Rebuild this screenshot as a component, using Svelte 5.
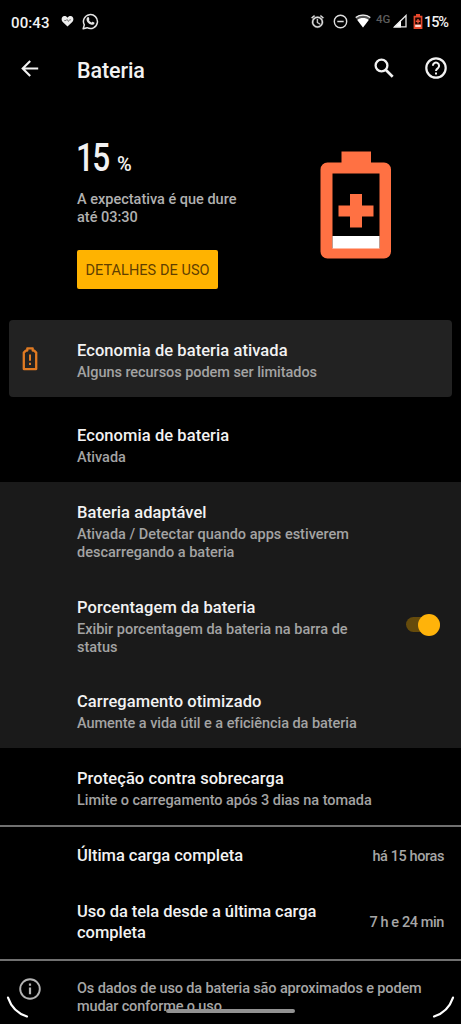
<script lang="ts">
    let showPercentage = $state(true);

    const usage = [
        { title: "Última carga completa", value: "há 15 horas" },
        {
            title: "Uso da tela desde a última carga completa",
            value: "7 h e 24 min",
        },
    ];
</script>

<div class="screen">
    <div class="status-bar">
        <span class="clock">00:43</span>
        <svg class="heart" width="13" height="12" viewBox="0 0 14 12">
            <path
                fill="#eee"
                d="M7 12 1.6 6.7C-.3 4.4.8.8 3.7.7 5.200.7 6.300 1.400 7 2.400 7.700 1.400 8.800.7 10.300.7c2.900.1 4 3.700 2.100 6z"
            />
            <path
                fill="none"
                stroke="#555"
                stroke-width="0.800"
                d="M3.500 5.500h2l1-1.200 1.500 2.200 1.200-1.800h1.500"
            />
        </svg>
        <svg class="whatsapp" width="17" height="17" viewBox="0 0 17 17">
            <path
                fill="none"
                stroke="#e4e4e4"
                stroke-width="1.500"
                stroke-linejoin="round"
                d="m1.200 15.800 1.100-3.900A7 7 0 1 1 5.100 14.700z"
            />
            <path
                fill="#e4e4e4"
                d="M5.600 4.300c.4-.4 1-.4 1.200.1l.6 1.500c.1.400-.5 1-.6 1.200.6 1.200 1.500 2 2.700 2.500.3-.2.800-1 1.200-.9l1.500.8c.5.300.2 1.100-.1 1.500-.8.900-2.100 1-3.200.6-2-.8-3.600-2.200-4.200-4.200-.4-1.200 0-2.400.9-3.100z"
            />
        </svg>
        <div class="status-right">
            <svg class="alarm" width="15" height="15" viewBox="0 0 24 24">
                <path
                    fill="#ddd"
                    stroke="#ddd"
                    stroke-width="0.500"
                    d="m22 5.700-4.600-3.900-1.300 1.500 4.600 3.900zM7.900 3.400 6.600 1.900 2 5.700l1.300 1.500zM12.500 8H11v6l4.700 2.900.8-1.200-4-2.400zM12 4a9 9 0 1 0 0 18 9 9 0 0 0 0-18zm0 15.700a6.700 6.700 0 1 1 0-13.400 6.700 6.700 0 0 1 0 13.400z"
                />
            </svg>
            <svg class="dnd" width="15" height="15" viewBox="0 0 15 15">
                <circle
                    cx="7.500"
                    cy="7.500"
                    r="6.200"
                    fill="none"
                    stroke="#ddd"
                    stroke-width="1.400"
                />
                <path stroke="#ddd" stroke-width="1.500" d="M4.300 7.500h6.400" />
            </svg>
            <svg class="wifi" width="16" height="14" viewBox="0 0 16 14">
                <path
                    fill="#555"
                    d="M8 .6C5 .6 2.300 1.600.2 3.300L8 13.400l7.800-10.100C13.700 1.600 11 .6 8 .6z"
                />
                <path
                    fill="none"
                    stroke="#eee"
                    stroke-width="1.300"
                    d="M.8 3.500C5 .4 11 .4 15.200 3.500"
                />
                <path
                    fill="#fff"
                    d="M8 13.400 2.300 6C5.400 3.400 10.600 3.400 13.700 6z"
                />
            </svg>
            <span class="network">4G</span>
            <svg class="signal" width="14" height="14" viewBox="0 0 14 14">
                <path fill="#fff" d="M.2 13.500 8 5.700v7.800z" />
                <path
                    fill="none"
                    stroke="#e8e8e8"
                    stroke-width="1.300"
                    d="M1.700 12.800 13 1.500v11.300z"
                />
            </svg>
            <svg class="battery-mini" width="10" height="15" viewBox="0 0 10 15">
                <path fill="#e8482c" d="M3 0h4v1.700h2.400V15H.6V1.700H3z" />
                <path fill="#1c0500" d="M2.200 3.500h5.600v7H2.200z" />
                <path
                    stroke="#f0553a"
                    stroke-width="1.400"
                    d="M5 5v4.400M2.800 7.200h4.400"
                />
                <path fill="#ffd9d0" d="M2.200 10.700h5.600v2.300H2.200z" />
            </svg>
            <span class="level">15%</span>
        </div>
    </div>

    <header class="app-bar">
        <svg width="18" height="17" viewBox="0 0 18 17">
            <path
                fill="none"
                stroke="#f2f2f2"
                stroke-width="2.100"
                d="M17.200 8.500H2M9.200 1 1.700 8.500 9.200 16"
            />
        </svg>
        <h1>Bateria</h1>
        <svg class="search" width="20" height="20" viewBox="0 0 20 20">
            <circle
                cx="7.500"
                cy="7.500"
                r="5.900"
                fill="none"
                stroke="#f2f2f2"
                stroke-width="2.300"
            />
            <path stroke="#f2f2f2" stroke-width="2.700" d="m11.700 11.700 7 7" />
        </svg>
        <svg class="help" width="22" height="22" viewBox="0 0 22 22">
            <circle
                cx="11"
                cy="11"
                r="9.700"
                fill="none"
                stroke="#f2f2f2"
                stroke-width="2.200"
            />
            <path
                fill="none"
                stroke="#f2f2f2"
                stroke-width="2"
                d="M7.900 8.800A3.100 3.100 0 1 1 13 11.100C11.700 12 11 12.500 11 14"
            />
            <path fill="#f2f2f2" d="M10 15.400h2v2h-2z" />
        </svg>
    </header>

    <section class="hero">
        <div class="hero-text">
            <div class="percent"><b>15</b><span>%</span></div>
            <p>A expectativa é que dure<br />até 03:30</p>
            <button>DETALHES DE USO</button>
        </div>
        <svg class="battery" width="72" height="108" viewBox="0 0 72 108">
            <path
                fill="#ff7143"
                fill-rule="evenodd"
                d="M21.500.5h29.500v11h13a7 7 0 0 1 7 7v82a7 7 0 0 1-7 7h-56.500a7 7 0 0 1-7-7v-82a7 7 0 0 1 7-7h14zM12.500 22.500V97h47V22.500z"
            />
            <path
                fill="#ff7143"
                d="M30 43h12v11.500h11.500v11H42v11H30v-11H18.500v-11H30z"
            />
            <path fill="#fff" d="M12.500 85h47v12.500h-47z" />
        </svg>
    </section>

    <div class="card">
        <svg width="16" height="24" viewBox="0 0 16 24">
            <path
                fill="none"
                stroke="#e07a22"
                stroke-width="2.300"
                stroke-linejoin="round"
                d="M5.300 3.600V1.400h5.400v2.200h1.500l2 2v16.500H1.800V5.600l2-2z"
            />
            <path fill="#e07a22" d="M7 7.500h2v6.300H7zM7 15.700h2v2.200H7z" />
        </svg>
        <div class="item">
            <h2>Economia de bateria ativada</h2>
            <p>Alguns recursos podem ser limitados</p>
        </div>
    </div>

    <div class="item">
        <h2>Economia de bateria</h2>
        <p>Ativada</p>
    </div>

    <div class="group">
        <div class="item">
            <h2>Bateria adaptável</h2>
            <p>
                Ativada / Detectar quando apps estiverem<br />descarregando a
                bateria
            </p>
        </div>
        <div class="item with-switch">
            <div>
                <h2>Porcentagem da bateria</h2>
                <p>Exibir porcentagem da bateria na barra de<br />status</p>
            </div>
            <button
                class="switch"
                class:on={showPercentage}
                aria-label="Porcentagem da bateria"
                onclick={() => (showPercentage = !showPercentage)}
            >
                <span class="thumb"></span>
            </button>
        </div>
        <div class="item">
            <h2>Carregamento otimizado</h2>
            <p class="tight">Aumente a vida útil e a eficiência da bateria</p>
        </div>
    </div>

    <div class="item">
        <h2>Proteção contra sobrecarga</h2>
        <p class="tight">Limite o carregamento após 3 dias na tomada</p>
    </div>

    <div class="usage">
        {#each usage as row}
            <div class="usage-row">
                <h2>{row.title}</h2>
                <span>{row.value}</span>
            </div>
        {/each}
    </div>

    <footer>
        <svg width="22" height="22" viewBox="0 0 22 22">
            <circle
                cx="11"
                cy="11"
                r="9.800"
                fill="none"
                stroke="#b4b4b4"
                stroke-width="1.900"
            />
            <path fill="#b4b4b4" d="M9.900 5.500h2.200v2.200H9.900zM9.900 9.500h2.200v6.800H9.900z" />
        </svg>
        <p>
            Os dados de uso da bateria são aproximados e podem<br />mudar conforme
            o uso.
        </p>
    </footer>

    <div class="home-bar"></div>
    <svg class="corner left" width="23" height="23" viewBox="0 0 23 23">
        <path d="M2 1.600C5 10.500 11.500 17.500 21 20.500" />
    </svg>
    <svg class="corner right" width="23" height="23" viewBox="0 0 23 23">
        <path d="M21 1.600C18 10.500 11.500 17.500 2 20.500" />
    </svg>
</div>

<style>
    :global(body) {
        background: #000;
    }

    .screen {
        position: relative;
        width: 461px;
        height: 1024px;
        overflow: hidden;
        background: #000;
        color: #f2f2f2;
        font-family: Roboto, "Liberation Sans", sans-serif;
    }

    h1,
    h2,
    p {
        margin: 0;
        white-space: nowrap;
    }

    svg {
        display: block;
        flex: none;
    }

    .status-bar {
        display: flex;
        align-items: center;
        height: 43px;
        padding: 0 11px;
        font-size: 15px;
        font-weight: 500;
    }

    .clock {
        width: 50px;
        padding-top: 2px;
        letter-spacing: 0.1px;
    }

    .heart {
        margin-top: -2px;
    }

    .whatsapp {
        margin-left: 8px;
    }

    .status-right {
        display: flex;
        align-items: center;
        margin-left: auto;
    }

    .alarm,
    .dnd,
    .wifi,
    .signal {
        margin-top: -1px;
    }

    .dnd {
        margin-left: 8px;
    }

    .wifi {
        margin-left: 7px;
    }

    .network {
        width: 16px;
        margin: -6px 1px 0 5px;
        color: #5c5c5c;
        font-size: 11.5px;
    }

    .battery-mini {
        margin-left: 6px;
    }

    .level {
        width: 26px;
        padding-top: 2px;
        margin-left: 1px;
        font-size: 14.5px;
        letter-spacing: -1.1px;
    }

    .app-bar {
        display: flex;
        align-items: center;
        height: 50px;
        padding: 0 14.5px 0 21px;
    }

    h1 {
        flex: 1;
        padding: 5px 0 0 38px;
        font-size: 21.5px;
        font-weight: 500;
        line-height: 26px;
        letter-spacing: -0.1px;
    }

    .help {
        margin-left: 30.5px;
    }

    .hero {
        display: flex;
        justify-content: space-between;
        box-sizing: border-box;
        height: 227px;
        padding: 43px 69.5px 0 77px;
    }

    .percent {
        display: flex;
        align-items: baseline;
        height: 55px;
        line-height: 44px;
    }

    .percent b {
        width: 41px;
        margin-left: -1px;
        font-size: 39px;
        font-weight: 500;
        letter-spacing: -2px;
        transform: scaleX(0.81);
        transform-origin: left;
    }

    .percent span {
        font-size: 20px;
        font-weight: 500;
    }

    .hero p {
        color: #b0b0b0;
        font-size: 14.5px;
        font-weight: 500;
        line-height: 18px;
    }

    .hero button {
        width: 141px;
        height: 39px;
        margin-top: 22.5px;
        padding: 3px 0 0;
        border: 0;
        border-radius: 2px;
        background: #ffb300;
        color: #5f3f00;
        font: 400 14.5px/20px Roboto, sans-serif;
        letter-spacing: 0.05px;
        white-space: nowrap;
    }

    .battery {
        margin-top: 15px;
    }

    .card {
        display: flex;
        align-items: center;
        height: 77px;
        margin: 0 9px 8px;
        padding-left: 13px;
        border-radius: 4px;
        background: #222;
    }

    .card .item {
        padding-left: 39px;
    }

    .card p,
    .item .tight {
        letter-spacing: -0.05px;
    }

    .item {
        padding: 20px 0 14.8px 77px;
    }

    h2 {
        font-size: 16.5px;
        font-weight: 500;
        line-height: 22px;
        letter-spacing: 0.07px;
    }

    .item p {
        margin-top: 2px;
        color: #a3a3a3;
        font-size: 14.5px;
        font-weight: 500;
        line-height: 18px;
    }

    .group {
        background: #1a1a1a;
    }

    .with-switch {
        display: flex;
        align-items: center;
        justify-content: space-between;
        padding-right: 21px;
    }

    .switch {
        display: flex;
        align-items: center;
        width: 34px;
        height: 15px;
        padding: 0;
        margin-top: -4px;
        border: 0;
        border-radius: 8px;
        background: #444;
    }

    .switch.on {
        justify-content: flex-end;
        background: #654b0c;
    }

    .thumb {
        flex: none;
        width: 22px;
        height: 22px;
        border-radius: 50%;
        background: #ffb30a;
    }

    .usage {
        border-top: 2px solid #707070;
        border-bottom: 2px solid #707070;
    }

    .usage-row {
        display: flex;
        align-items: center;
        justify-content: space-between;
        padding: 18.5px 17px 16px 77px;
    }

    .usage-row h2 {
        width: 245px;
        line-height: 21px;
        letter-spacing: -0.03px;
        white-space: normal;
    }

    .usage-row span {
        padding-top: 1px;
        color: #a6a6a6;
        font-size: 14.5px;
        font-weight: 500;
        letter-spacing: -0.4px;
        white-space: nowrap;
    }

    footer {
        display: flex;
        padding: 17px 0 0 19px;
    }

    footer p {
        padding: 2px 0 0 36px;
        color: #a6a6a6;
        font-size: 14.5px;
        font-weight: 500;
        line-height: 18px;
        letter-spacing: -0.13px;
    }

    /* system gesture overlay */
    .home-bar {
        position: absolute;
        left: 166px;
        bottom: 11px;
        width: 129px;
        height: 4px;
        border-radius: 2px;
        background: #929292;
    }

    .corner {
        position: absolute;
        bottom: 5px;
        fill: none;
        stroke: #fff;
        stroke-width: 2.2;
        stroke-linecap: round;
    }

    .left {
        left: 6px;
    }

    .right {
        right: 6px;
    }
</style>
